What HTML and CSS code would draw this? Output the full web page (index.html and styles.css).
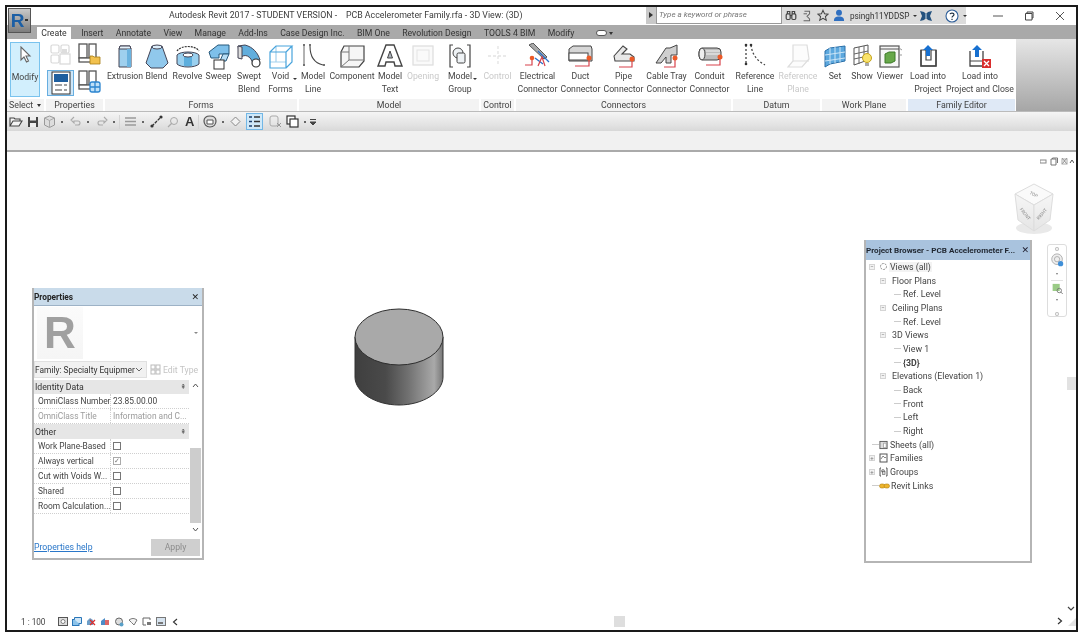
FILE: index.html
```html
<!DOCTYPE html>
<html lang="en">
<head>
<meta charset="utf-8">
<title>Autodesk Revit 2017</title>
<link rel="stylesheet" href="styles.css">
</head>
<body>
<div class="frame">
  <div class="appbtn"><span class="appr">R</span><span class="appdot"></span></div>

  <header class="titlebar">
    <div class="title">Autodesk Revit 2017 - STUDENT VERSION - &nbsp; &nbsp;PCB Accelerometer Family.rfa - 3D View: (3D)</div>
    <div class="searchgroup">
      <span class="sarrow"></span>
      <div class="search">Type a keyword or phrase</div>
      <div class="infotools">
        <svg width="12" height="13" viewBox="0 0 15 14"><g fill="none" stroke="#444" stroke-width="1.500"><rect x="1.500" y="5" width="5" height="7" rx="1.500"/><rect x="8.500" y="5" width="5" height="7" rx="1.500"/><path d="M3 5V2h3v3M9 5V2h3v3M6 7h3"/></g></svg>
        <svg width="12" height="13" viewBox="0 0 14 14"><g fill="none" stroke="#666" stroke-width="1.200"><path d="M4 2h6v3L7 8l3 3v2H3"/><path d="M3 5h4"/></g></svg>
        <svg width="12" height="13" viewBox="0 0 14 14"><path d="M7 1l1.800 4 4.200.4-3.200 2.800 1 4.300L7 10.200 3.200 12.500l1-4.300L1 5.400 5.200 5z" fill="none" stroke="#444" stroke-width="1.200"/></svg>
        <svg width="12" height="13" viewBox="0 0 13 14"><circle cx="6.500" cy="4" r="3.200" fill="#2f6fc0"/><path d="M1 13c0-4 2-5 5.500-5s5.500 1 5.500 5z" fill="#2f6fc0"/></svg>
        <span class="user">psingh11YDDSP</span><span class="caret small"></span>
        <svg class="xicon" width="14" height="14" viewBox="0 0 14 14"><path d="M1 2l4 1 2 2 2-2 4-1-2 5 2 5-4-1-2-2-2 2-4 1 2-5z" fill="#24527f"/><path d="M7 5v4" stroke="#cfe0ee"/></svg>
        <svg class="help" width="14" height="14" viewBox="0 0 14 14"><circle cx="7" cy="7" r="6" fill="#fff" stroke="#2f5f9a" stroke-width="1.100"/><path d="M5 5.200C5.200 3.700 9 3.500 9 5.500 9 7 7 6.800 7 8.500M7 9.800v1.300" fill="none" stroke="#234" stroke-width="1.200"/></svg>
        <span class="caret small last"></span>
      </div>
    </div>
    <div class="winctl">
      <svg width="10" height="10" viewBox="0 0 10 10"><path d="M0 5h10" stroke="#555"/></svg>
      <svg width="10" height="10" viewBox="0 0 10 10"><path d="M1.500 2.500h6.500v6.500h-6.500zM3 2.500V1h6v6H8" fill="none" stroke="#444"/></svg>
      <svg width="10" height="10" viewBox="0 0 10 10"><path d="M1 1l8 8M9 1l-8 8" stroke="#555"/></svg>
    </div>
  </header>

  <nav class="tabs">
    <span class="tab active">Create</span>
    <span class="tab">Insert</span>
    <span class="tab">Annotate</span>
    <span class="tab">View</span>
    <span class="tab">Manage</span>
    <span class="tab">Add-Ins</span>
    <span class="tab">Case Design Inc.</span>
    <span class="tab">BIM One</span>
    <span class="tab">Revolution Design</span>
    <span class="tab">TOOLS 4 BIM</span>
    <span class="tab">Modify</span>
    <span class="tabctl"><span class="pill"></span><span class="caret"></span></span>
  </nav>

  <section class="ribbon">
    <div class="panel p-select">
      <div class="pbody">
        <div class="modify">
          <svg width="14" height="18" viewBox="0 0 14 18"><path d="M3 1v13l3-3 2.500 5 2-1-2.500-5h4z" fill="#fff" stroke="#666" stroke-width="1.100"/></svg>
          <span class="lbl modlbl">Modify</span>
        </div>
      </div>
      <div class="pfoot footleft">Select <span class="caret dark"></span></div>
    </div>
    <div class="panel p-props">
      <div class="pbody propgrid">
        <svg class="pi1" width="22" height="22" viewBox="0 0 22 22"><g fill="#fff" stroke="#d8d8d8" stroke-width="1.200"><rect x="1" y="2" width="8" height="8" rx="1.500"/><rect x="11" y="2" width="8" height="8" rx="1.500"/><rect x="1" y="12" width="8" height="8" rx="1.500"/><rect x="10" y="11" width="10" height="10"/></g><rect x="12" y="6" width="5" height="4" fill="#ddd"/></svg>
        <svg class="pi2" width="23" height="22" viewBox="0 0 23 22"><g fill="#fff" stroke="#555" stroke-width="1.300"><rect x="1" y="1" width="8" height="14"/><rect x="11" y="1" width="7" height="14"/><rect x="1" y="15" width="17" height="4"/></g><path d="M12 13h3l1 1h6v7H12z" fill="#f2c14e" stroke="#a67c12" stroke-width=".8"/></svg>
        <div class="pi3"><svg width="20" height="24" viewBox="0 0 20 24"><rect x="1" y="1" width="18" height="22" fill="#fff" stroke="#333"/><rect x="3" y="3" width="14" height="8" fill="#1f5f9f"/><path d="M4 14h7M4 19h7M13 14h3M13 19h3" stroke="#444" stroke-width="1.200"/></svg></div>
        <svg class="pi4" width="23" height="23" viewBox="0 0 23 23"><g fill="#fff" stroke="#555" stroke-width="1.300"><rect x="1" y="1" width="8" height="14"/><rect x="11" y="1" width="7" height="14"/><rect x="1" y="15" width="13" height="4"/></g><rect x="12" y="12" width="10" height="10" rx="2" fill="#bfe0f7" stroke="#2b84cf" stroke-width="1.300"/><path d="M17 12v10M12 17h10" stroke="#2b84cf" stroke-width="1.300"/></svg>
      </div>
      <div class="pfoot">Properties</div>
    </div>
    <div class="panel p-forms">
      <div class="pbody pad4">
        <div class="tool w32"><svg class="ico" width="28" height="27" viewBox="0 0 28 27"><path d="M9 3h10l1 3v18H8V6z" fill="#9fd0ee" stroke="#445" stroke-width="1"/><path d="M9 3h10l1 3H8z" fill="#e6f3fb" stroke="#445"/><path d="M16 6v18h4V6z" fill="#6bb3df"/></svg><span class="lbl">Extrusion</span></div>
        <div class="tool w31"><svg class="ico" width="28" height="27" viewBox="0 0 28 27"><path d="M9 3h10l6 17-5 5H8l-5-5z" fill="#90c8ec" stroke="#445"/><ellipse cx="14" cy="4" rx="5" ry="2" fill="#dceefa" stroke="#445"/></svg><span class="lbl">Blend</span></div>
        <div class="tool w31"><svg class="ico" width="28" height="27" viewBox="0 0 28 27"><path d="M3 8c4-6 18-6 22 0" fill="none" stroke="#333" stroke-dasharray="2 1" stroke-width="1.200"/><path d="M3 12c3-4 19-4 22 0v9c-4 4-18 4-22 0z" fill="#9ad0ef" stroke="#445"/><path d="M10 12v11h8V12z" fill="#5caedd"/><ellipse cx="14" cy="12" rx="5" ry="2" fill="#fff" stroke="#445"/></svg><span class="lbl">Revolve</span></div>
        <div class="tool w31"><svg class="ico" width="28" height="27" viewBox="0 0 28 27"><path d="M4 9l9-7h11v9H14v4H6z" fill="#7ec0ea" stroke="#27587a"/><path d="M18 11h6l-3 7h-6z" fill="#b7def5" stroke="#27587a"/><rect x="9" y="17" width="10" height="9" fill="#fff" stroke="#333"/></svg><span class="lbl">Sweep</span></div>
        <div class="tool w30"><svg class="ico" width="28" height="27" viewBox="0 0 28 27"><path d="M3 3l7-1c8 2 13 8 15 15l-7 4C16 13 10 10 5 15z" fill="#62aedd" stroke="#445"/><path d="M3 3v12l4 1V4z" fill="#ddd" stroke="#445"/><circle cx="21" cy="20" r="4" fill="#fff" stroke="#333" stroke-width="1.200"/></svg><span class="lbl">Swept<br>Blend</span></div>
        <div class="tool w33"><svg class="ico" width="26" height="27" viewBox="0 0 26 27"><g fill="none" stroke="#49a4dc" stroke-width="1.200"><path d="M2 9h16v16H2zM2 9l6-6h16L18 9M24 3v16l-6 6"/><path d="M8 3v16H2M8 19l10 0" stroke-opacity=".5"/></g></svg><span class="lbl">Void<br>Forms</span><span class="dropdot"></span></div>
      </div>
      <div class="pfoot">Forms</div>
    </div>
    <div class="panel p-model">
      <div class="pbody">
        <div class="tool w28"><svg class="ico" width="26" height="27" viewBox="0 0 26 27"><g fill="#444"><circle cx="4" cy="2" r="1"/><circle cx="4" cy="22" r="1"/><circle cx="10" cy="2" r="1"/><circle cx="24" cy="22" r="1"/></g><path d="M4 3v18" stroke="#666"/><path d="M10 3c0 10 4 17 13 19" fill="none" stroke="#444" stroke-width="1.100"/></svg><span class="lbl">Model<br>Line</span></div>
        <div class="tool w50"><svg class="ico" width="28" height="27" viewBox="0 0 28 27"><path d="M6 3h20v15l-5 6H3V9z" fill="#f6f6f6" stroke="#444" stroke-width="1.200"/><path d="M3 9h8V3M11 9v8h15M11 17l-8 7" fill="none" stroke="#777"/></svg><span class="lbl">Component</span></div>
        <div class="tool w26"><svg class="ico" width="28" height="27" viewBox="0 0 28 27"><path d="M10 2h8l8 21h-7l-1-4h-8l-1 4H2z" fill="#fff" stroke="#444" stroke-width="1.400"/><path d="M14 8l-2.500 7h5z" fill="#aeb5bd" stroke="#444"/></svg><span class="lbl">Model<br>Text</span></div>
        <div class="tool w40"><svg class="ico" width="24" height="27" viewBox="0 0 24 27"><rect x="2" y="3" width="20" height="19" fill="#fafafa" stroke="#ddd" stroke-width="1.200"/><rect x="6" y="7" width="12" height="11" fill="none" stroke="#e4e4e4"/></svg><span class="lbl off">Opening</span></div>
        <div class="tool w34"><svg class="ico" width="24" height="27" viewBox="0 0 24 27"><path d="M5 2H2v22h3M19 2h3v22h-3" fill="none" stroke="#444" stroke-width="1.200"/><circle cx="10" cy="10" r="5" fill="#eef2f5" stroke="#444"/><rect x="9" y="10" width="8" height="10" rx="1.500" fill="#eef2f5" stroke="#444"/></svg><span class="lbl">Model<br>Group</span><span class="dropdot"></span></div>
      </div>
      <div class="pfoot">Model</div>
    </div>
    <div class="panel p-control">
      <div class="pbody">
        <div class="tool w33"><svg class="ico" width="24" height="27" viewBox="0 0 24 27"><path d="M12 3v20M2 13h20" stroke="#e3e3e3" stroke-width="1.300" stroke-dasharray="3 2"/></svg><span class="lbl off">Control</span></div>
      </div>
      <div class="pfoot">Control</div>
    </div>
    <div class="panel p-conn">
      <div class="pbody">
        <div class="tool w43"><svg class="ico" width="28" height="27" viewBox="0 0 28 27"><path d="M5 2l4-2 14 14-3 2z" fill="#aaa" stroke="#555"/><path d="M11 15l8 6M25 19L14 8" stroke="#2a70c9" stroke-width="1.300"/><path d="M14 23l4-9 3 9" fill="none" stroke="#d8434c" stroke-width="1.200"/><path d="M1 22h7v-7" fill="none" stroke="#d8434c" stroke-width="1.200"/><circle cx="8" cy="15" r="2.300" fill="#ec5a28"/></svg><span class="lbl">Electrical<br>Connector</span></div>
        <div class="tool w43"><svg class="ico" width="28" height="27" viewBox="0 0 28 27"><path d="M2 6l4-3h18l1 3v12H2z" fill="#d6d6d6" stroke="#444"/><rect x="2" y="10" width="19" height="7" fill="#fff" stroke="#444"/><path d="M8 23h14v-7" fill="none" stroke="#d8434c" stroke-width="1.200"/><circle cx="22" cy="15" r="2.500" fill="#ec5a28"/></svg><span class="lbl">Duct<br>Connector</span></div>
        <div class="tool w43"><svg class="ico" width="28" height="27" viewBox="0 0 28 27"><path d="M4 13L13 3l4 3-5 5h8l4 3v4H5z" fill="#e8e8e8" stroke="#444" stroke-width="1.100"/><path d="M9 24h13v-7" fill="none" stroke="#d8434c" stroke-width="1.200"/><circle cx="22" cy="16" r="2.500" fill="#ec5a28"/></svg><span class="lbl">Pipe<br>Connector</span></div>
        <div class="tool w43"><svg class="ico" width="28" height="27" viewBox="0 0 28 27"><path d="M3 20L13 5h4l7-3v10h-6v8h-5v-6l-5 6z" fill="#cfcfcf" stroke="#444"/><path d="M11 24h11v-8" fill="none" stroke="#d8434c" stroke-width="1.200"/><circle cx="22" cy="15" r="2.500" fill="#ec5a28"/></svg><span class="lbl">Cable Tray<br>Connector</span></div>
        <div class="tool w43"><svg class="ico" width="28" height="27" viewBox="0 0 28 27"><rect x="3" y="5" width="22" height="12" rx="4" fill="#bdbdbd" stroke="#444"/><ellipse cx="6" cy="11" rx="3" ry="6" fill="#eee" stroke="#444"/><path d="M10 8h14M10 11h14" stroke="#f4f4f4"/><path d="M10 22h14v-7" fill="none" stroke="#d8434c" stroke-width="1.200"/><circle cx="24" cy="14" r="2.500" fill="#ec5a28"/></svg><span class="lbl">Conduit<br>Connector</span></div>
      </div>
      <div class="pfoot">Connectors</div>
    </div>
    <div class="panel p-datum">
      <div class="pbody">
        <div class="tool w44"><svg class="ico" width="26" height="27" viewBox="0 0 26 27"><g fill="none" stroke="#444" stroke-width="1.300" stroke-dasharray="2 2"><path d="M4 2v18"/><path d="M9 2c1 9 6 16 14 20"/></g><g fill="#333"><circle cx="4" cy="2" r="1.300"/><circle cx="9" cy="2" r="1.300"/><circle cx="4" cy="21" r="1.300"/></g></svg><span class="lbl">Reference<br>Line</span></div>
        <div class="tool w42"><svg class="ico" width="26" height="27" viewBox="0 0 26 27"><path d="M8 2h14l2 14-7 8H3l5-6z" fill="#fcfcfc" stroke="#ddd" stroke-width="1.200"/><path d="M8 18h16" stroke="#ddd"/></svg><span class="lbl off">Reference<br>Plane</span></div>
      </div>
      <div class="pfoot">Datum</div>
    </div>
    <div class="panel p-wp">
      <div class="pbody">
        <div class="tool w26"><svg class="ico" width="22" height="27" viewBox="0 0 22 27"><path d="M6 5l15-2v15L6 21 1 24V8z" fill="#5ca8de" stroke="#2a6fa8"/><path d="M6 5v16M11 4v16M16 4v15M1 12l20-3M1 18l20-3" stroke="#cde6f7"/></svg><span class="lbl">Set</span></div>
        <div class="tool w28"><svg class="ico" width="22" height="27" viewBox="0 0 22 27"><path d="M3 5l14-3v15L3 22z" fill="#fff" stroke="#555"/><path d="M8 4v17M13 3v16M3 11l14-3M3 16l14-3" stroke="#666"/><circle cx="16" cy="15" r="4.500" fill="#f9e36b" stroke="#c3a21d"/><path d="M14 20h4v3h-4z" fill="#aaa"/></svg><span class="lbl">Show</span></div>
        <div class="tool w28"><svg class="ico" width="24" height="27" viewBox="0 0 24 27"><rect x="2" y="3" width="19" height="21" fill="#f7f7f7" stroke="#555" stroke-width="1.200"/><path d="M2 6h19" stroke="#555"/><path d="M7 11l4-2h6v9l-4 2H7z" fill="#67a84a" stroke="#3d7a28"/><path d="M21 5l3 2M21 12h3" stroke="#999"/></svg><span class="lbl">Viewer</span></div>
      </div>
      <div class="pfoot">Work Plane</div>
    </div>
    <div class="panel p-fam">
      <div class="pbody">
        <div class="tool w40"><svg class="ico" width="24" height="27" viewBox="0 0 24 27"><path d="M5 7v16h15V7h-5v10h-5V7z" fill="#fff" stroke="#444" stroke-width="1.200"/><path d="M5 7v16h15V7" fill="none" stroke="#444" stroke-width="1.400"/><path d="M12 2l5 5h-3v6h-4V7H7z" fill="#1770d0"/></svg><span class="lbl">Load into<br>Project</span></div>
        <div class="tool w64"><svg class="ico" width="24" height="27" viewBox="0 0 24 27"><path d="M2 8v15h13V8" fill="#fff" stroke="#444" stroke-width="1.300"/><path d="M2 18h13" stroke="#444"/><path d="M9 2l5 5h-3v7H7V7H4z" fill="#1770d0"/><rect x="14" y="16" width="9" height="9" fill="#d92d2d"/><path d="M16 18l5 5M21 18l-5 5" stroke="#fff" stroke-width="1.300"/></svg><span class="lbl">Load into<br>Project and Close</span></div>
      </div>
      <div class="pfoot blue">Family Editor</div>
    </div>
    <div class="ribfill"></div>
  </section>

  <div class="qat">
    <svg width="14" height="12" viewBox="0 0 14 12"><path d="M1 10V2h4l1 1h5v2M1 10l3-5h9l-3 5z" fill="#f4f4f4" stroke="#444" stroke-width="1.100"/></svg>
    <svg class="g3" width="12" height="12" viewBox="0 0 12 12"><path d="M1 1h10v10H1z" fill="#444"/><rect x="3" y="1" width="6" height="3.500" fill="#eee"/><rect x="3" y="7" width="6" height="4" fill="#eee"/></svg>
    <svg class="g3" width="13" height="13" viewBox="0 0 13 13"><path d="M6.500 1l5 2v7l-5 2.500L1.500 10V3z" fill="#ddd" stroke="#999"/><path d="M1.500 3l5 2.500 5-2.500M6.500 5.500v7" stroke="#aaa" fill="none"/></svg>
    <span class="dot"></span>
    <svg class="g8" width="12" height="11" viewBox="0 0 12 11"><path d="M4 1L1 4l3 3V5h4a2 2 0 010 4H5" fill="none" stroke="#aaa" stroke-width="1.100"/></svg>
    <span class="dot"></span>
    <svg class="g8" width="12" height="11" viewBox="0 0 12 11"><path d="M8 1l3 3-3 3V5H4a2 2 0 000 4h3" fill="none" stroke="#aaa" stroke-width="1.100"/></svg>
    <span class="dot"></span>
    <span class="qsep"></span>
    <svg width="13" height="9" viewBox="0 0 13 9"><path d="M1 1h11M1 8h11M1 4.500h11" stroke="#9a9a9a" stroke-width="1.300"/></svg>
    <span class="dot"></span>
    <svg class="g5" width="13" height="13" viewBox="0 0 13 13"><path d="M2 11L11 2" stroke="#333" stroke-width="1.300" stroke-dasharray="3 1"/><circle cx="2" cy="11" r="1.600" fill="#333"/><circle cx="11" cy="2" r="1.600" fill="#333"/></svg>
    <svg class="g3" width="12" height="12" viewBox="0 0 12 12"><circle cx="7" cy="5" r="3.500" fill="none" stroke="#aaa"/><path d="M1 11l4-4" stroke="#aaa" stroke-width="1.300"/></svg>
    <span class="qa">A</span>
    <span class="qsep"></span>
    <svg width="14" height="13" viewBox="0 0 14 13"><path d="M7 1c4 0 6 2 6 5s-2 6-6 6-6-3-6-6 2-5 6-5z" fill="#ddd" stroke="#555" stroke-width="1.200"/><path d="M4 5h6v4H4z" fill="#fff" stroke="#555"/></svg>
    <span class="dot"></span>
    <svg class="g5" width="11" height="12" viewBox="0 0 11 12"><path d="M5.500 1L10 5.500 5.500 10 1 5.500z" fill="#f2f2f2" stroke="#888"/></svg>
    <div class="qhi"><svg width="13" height="13" viewBox="0 0 13 13"><path d="M1 2h3M1 6.500h3M1 11h3" stroke="#1b3f70" stroke-width="1.600"/><path d="M6 2h6M6 6.500h6M6 11h6" stroke="#333" stroke-width="1.400"/></svg></div>
    <svg class="g5" width="13" height="13" viewBox="0 0 13 13"><rect x="1" y="1" width="8" height="10" rx="2" fill="none" stroke="#aaa"/><path d="M8 8l4 4M12 8l-4 4" stroke="#999"/></svg>
    <svg class="g3" width="13" height="13" viewBox="0 0 13 13"><rect x="1" y="1" width="8" height="8" fill="#fff" stroke="#333" stroke-width="1.200"/><rect x="4" y="4" width="8" height="8" fill="#fff" stroke="#333" stroke-width="1.200"/></svg>
    <span class="dot"></span>
    <svg width="8" height="8" viewBox="0 0 8 8"><path d="M1 1.500h6M1 4l3 3 3-3z" stroke="#444" fill="#444"/></svg>
  </div>
  <div class="band"></div>

  <main class="canvas">
    <div class="viewctl">
      <svg width="34" height="9" viewBox="0 0 34 9"><rect x="0" y="3" width="6" height="3" fill="none" stroke="#888"/><path d="M11 2h5v6h-5zM12.500 2V1h5v5" fill="none" stroke="#777"/><path d="M22 1l5 6M27 1l-5 6" stroke="#888"/><rect x="22" y="2" width="5" height="5" fill="none" stroke="#aaa"/><path d="M30 6l2-3 2 3" fill="none" stroke="#555"/></svg>
    </div>

    <svg class="viewcube" width="44" height="54" viewBox="0 0 44 54">
      <defs><linearGradient id="cf" x1="0" y1="0" x2="0" y2="1"><stop offset="0" stop-color="#f6f6f6"/><stop offset="1" stop-color="#e5e5e5"/></linearGradient></defs>
      <ellipse cx="22" cy="46" rx="18" ry="6" fill="#e9e9e9"/>
      <path d="M22 2L41 12 22 23 3 12z" fill="#fafafa" stroke="#ddd"/>
      <path d="M3 12L22 23V49L6 38z" fill="url(#cf)" stroke="#ddd"/>
      <path d="M41 12L22 23V49L38 38z" fill="url(#cf)" stroke="#ddd"/>
      <text class="cubetxt" x="22" y="14" transform="rotate(28 22 12)">TOP</text>
      <text class="cubetxt" x="12" y="33" transform="rotate(50 12 33)">FRONT</text>
      <text class="cubetxt" x="31" y="33" transform="rotate(-50 31 33)">RIGHT</text>
    </svg>

    <div class="navbar">
      <span class="navdot"></span>
      <svg width="15" height="17" viewBox="0 0 15 17"><circle cx="7" cy="7" r="6" fill="#eee" stroke="#aaa"/><circle cx="7" cy="7" r="3" fill="none" stroke="#aaa"/><circle cx="11" cy="12" r="3" fill="#3f8fd8"/></svg>
      <span class="navcaret"></span>
      <span class="navline"></span>
      <svg width="13" height="13" viewBox="0 0 13 13"><rect x="1" y="1" width="8" height="8" fill="#9acb86"/><circle cx="8.500" cy="8.500" r="2.500" fill="none" stroke="#777"/><path d="M10 10l2.500 2.500" stroke="#777"/></svg>
      <span class="navcaret"></span>
      <span class="navdot lastdot"></span>
    </div>

    <svg class="cylinder" width="92" height="100" viewBox="0 0 92 100">
      <defs>
        <linearGradient id="cyl" x1="0" y1="0" x2="1" y2="0">
          <stop offset="0" stop-color="#3f3f3f"/>
          <stop offset=".35" stop-color="#4a4a4a"/>
          <stop offset=".6" stop-color="#707070"/>
          <stop offset=".9" stop-color="#a9a9a9"/>
          <stop offset="1" stop-color="#777"/>
        </linearGradient>
      </defs>
      <path d="M2 30V70C2 85 22 98 46 98S90 85 90 70V30z" fill="url(#cyl)" stroke="#333"/>
      <ellipse cx="46" cy="30" rx="44" ry="28" fill="#a9a9a9" stroke="#2f2f2f"/>
    </svg>

    <aside class="props">
      <div class="ptitle"><span>Properties</span><span class="px">✕</span></div>
      <div class="preview">
        <div class="rlogo"><span>R</span></div>
        <span class="pvcaret"></span>
      </div>
      <div class="typerow">
        <div class="typesel"><span class="typeval">Family: Specialty Equipmer</span><svg width="8" height="5" viewBox="0 0 8 5"><path d="M1 1l3 3 3-3" fill="none" stroke="#666"/></svg></div>
        <div class="edittype"><svg width="11" height="11" viewBox="0 0 11 11"><g fill="none" stroke="#bbb"><rect x="1" y="1" width="4" height="4"/><rect x="6" y="1" width="4" height="4"/><rect x="1" y="6" width="4" height="4"/><rect x="6" y="6" width="4" height="4"/></g></svg><span>Edit Type</span></div>
      </div>
      <div class="ptable">
        <div class="rows">
          <div class="ghead"><span>Identity Data</span><span class="coll">⇞</span></div>
          <div class="prow"><span class="pk">OmniClass Number</span><span class="pv">23.85.00.00</span></div>
          <div class="prow dim"><span class="pk">OmniClass Title</span><span class="pv">Information and C...</span></div>
          <div class="ghead other"><span>Other</span><span class="coll">⇞</span></div>
          <div class="prow"><span class="pk">Work Plane-Based</span><span class="pv"><span class="cb"></span></span></div>
          <div class="prow"><span class="pk">Always vertical</span><span class="pv"><span class="cb on">✓</span></span></div>
          <div class="prow"><span class="pk">Cut with Voids W...</span><span class="pv"><span class="cb"></span></span></div>
          <div class="prow"><span class="pk">Shared</span><span class="pv"><span class="cb"></span></span></div>
          <div class="prow"><span class="pk">Room Calculation...</span><span class="pv"><span class="cb"></span></span></div>
        </div>
        <div class="pscroll">
          <svg width="7" height="5" viewBox="0 0 7 5"><path d="M1 4l2.500-3L6 4" fill="none" stroke="#555"/></svg>
          <div class="pthumb"></div>
          <svg width="7" height="5" viewBox="0 0 7 5"><path d="M1 1l2.500 3L6 1" fill="none" stroke="#555"/></svg>
        </div>
      </div>
      <div class="pfooter"><span class="phelp">Properties help</span><span class="apply">Apply</span></div>
    </aside>

    <aside class="browser">
      <div class="btitle"><span>Project Browser - PCB Accelerometer F...</span><span class="bx">✕</span></div>
      <div class="tree">
        <div class="node n0"><span class="exp">−</span><svg class="ti" width="9" height="9" viewBox="0 0 9 9"><circle cx="4.500" cy="4.500" r="3" fill="none" stroke="#888" stroke-dasharray="2 1"/></svg><span class="sel">Views (all)</span></div>
        <div class="node n1"><span class="exp">−</span><span>Floor Plans</span></div>
        <div class="node n2"><span class="dash"></span><span>Ref. Level</span></div>
        <div class="node n1"><span class="exp">−</span><span>Ceiling Plans</span></div>
        <div class="node n2"><span class="dash"></span><span>Ref. Level</span></div>
        <div class="node n1"><span class="exp">−</span><span>3D Views</span></div>
        <div class="node n2"><span class="dash"></span><span>View 1</span></div>
        <div class="node n2"><span class="dash"></span><b>{3D}</b></div>
        <div class="node n1"><span class="exp">−</span><span>Elevations (Elevation 1)</span></div>
        <div class="node n2"><span class="dash"></span><span>Back</span></div>
        <div class="node n2"><span class="dash"></span><span>Front</span></div>
        <div class="node n2"><span class="dash"></span><span>Left</span></div>
        <div class="node n2"><span class="dash"></span><span>Right</span></div>
        <div class="node n0"><span class="dash short"></span><svg class="ti" width="10" height="10" viewBox="0 0 10 10"><rect x="1" y="1" width="8" height="8" fill="#ddd" stroke="#555"/><path d="M5 3h3v5H5z" fill="#fff" stroke="#777" stroke-width=".6"/></svg><span>Sheets (all)</span></div>
        <div class="node n0"><span class="exp">+</span><svg class="ti" width="9" height="10" viewBox="0 0 9 10"><rect x="1" y="1" width="7" height="8" fill="#fff" stroke="#555"/><path d="M2 6l2-3 2 2 1-1" fill="none" stroke="#555" stroke-width=".7"/></svg><span>Families</span></div>
        <div class="node n0"><span class="exp">+</span><svg class="ti" width="9" height="10" viewBox="0 0 9 10"><path d="M2 1H1v8h1M7 1h1v8H7" fill="none" stroke="#555"/><circle cx="4" cy="4" r="1.500" fill="#ccc" stroke="#555" stroke-width=".6"/><rect x="3.500" y="4.500" width="2.500" height="3" fill="#ddd" stroke="#555" stroke-width=".6"/></svg><span>Groups</span></div>
        <div class="node n0 links"><span class="dash short"></span><svg class="ti" width="11" height="6" viewBox="0 0 11 6"><rect x=".5" y="1" width="5.500" height="4" rx="2" fill="#eeb52d" stroke="#b07d0a" stroke-width=".6"/><rect x="5" y="1" width="5.500" height="4" rx="2" fill="#eeb52d" stroke="#b07d0a" stroke-width=".6"/></svg><span>Revit Links</span></div>
      </div>
    </aside>

    <div class="vthumb"></div>
    <svg class="vdown" width="8" height="6" viewBox="0 0 8 6"><path d="M1 1l3 3 3-3" fill="none" stroke="#444" stroke-width="1.200"/></svg>

    <footer class="viewbar">
      <span class="scale">1 : 100</span>
      <div class="vbicons">
        <svg width="10" height="9" viewBox="0 0 10 9"><rect x=".5" y=".5" width="9" height="8" fill="#ddd" stroke="#555"/><circle cx="5" cy="4.500" r="2" fill="#fff" stroke="#555" stroke-width=".7"/></svg>
        <svg width="10" height="9" viewBox="0 0 10 9"><rect x=".5" y="2.500" width="6.500" height="6" fill="#8cc3ea" stroke="#2a76b8"/><path d="M2.500 2.500V.5h7v6H7" fill="#cfe6f6" stroke="#2a76b8"/></svg>
        <svg width="10" height="9" viewBox="0 0 10 9"><path d="M1 8V4l3-3 3 2v5z" fill="#6d9fc9"/><path d="M4 3l5 5M9 3L4 8" stroke="#d92d2d" stroke-width="1.300"/></svg>
        <svg width="10" height="9" viewBox="0 0 10 9"><path d="M1 8V4l4-3v7z" fill="#4d8cc7"/><path d="M5 3h4v5H5z" fill="#d66"/></svg>
        <svg width="10" height="10" viewBox="0 0 10 10"><circle cx="5" cy="4.500" r="3.500" fill="#ddd" stroke="#666"/><circle cx="7.500" cy="7.500" r="2" fill="#5aa0c8"/></svg>
        <svg width="10" height="8" viewBox="0 0 10 8"><path d="M1 2c3-2 5-2 8 0L6 7C4 5 3 4 1 2z" fill="#f3f3f3" stroke="#777"/></svg>
        <svg width="10" height="9" viewBox="0 0 10 9"><path d="M1 1h7v2M1 1v7h3" fill="none" stroke="#666"/><rect x="5" y="5" width="4" height="3" fill="#777"/></svg>
        <svg width="10" height="9" viewBox="0 0 10 9"><rect x=".5" y=".5" width="9" height="8" fill="#d6e3ef" stroke="#777"/><rect x="2" y="5" width="5" height="2" fill="#777"/></svg>
        <svg class="vbback" width="6" height="8" viewBox="0 0 6 8"><path d="M5 1L1.500 4 5 7" fill="none" stroke="#333" stroke-width="1.100"/></svg>
      </div>
      <div class="hthumb"></div>
      <svg class="hright" width="6" height="8" viewBox="0 0 6 8"><path d="M1 1l3.500 3L1 7" fill="none" stroke="#333" stroke-width="1.200"/></svg>
      <svg class="grip" width="8" height="8" viewBox="0 0 8 8"><path d="M8 0v8H0z" fill="#e3e3e3"/></svg>
    </footer>
  </main>
</div>
</body>
</html>
```

FILE: styles.css
```css
* { box-sizing: border-box; }
html, body { margin: 0; padding: 0; background: #fff; }
body {
  width: 1084px;
  height: 636px;
  overflow: hidden;
  padding: 5px 6px 4px 5px;
  font-family: Roboto, "Liberation Sans", sans-serif;
  font-size: 8.700px;
  color: #3c3c3c;
}
.frame {
  position: relative;
  width: 1073px;
  height: 627px;
  border: 2px solid #1a1a1a;
  display: flex;
  flex-direction: column;
  background: #fff;
  filter: blur(0.45px);
  overflow: hidden;
}

/* App button */
.appbtn {
  position: absolute;
  left: 1px;
  top: 1px;
  width: 23px;
  height: 25px;
  background: linear-gradient(#c9c9c9, #7d7d7d);
  border: 1px solid #555;
  display: flex;
  align-items: center;
  justify-content: center;
  z-index: 3;
}
.appr { font: bold 19px "Liberation Sans", sans-serif; color: #1c5fa5; margin-right: 4px; }
.appdot { position: absolute; right: 2px; top: 10px; width: 3px; height: 2px; background: #333; }

/* Title bar */
.titlebar { height: 18px; display: flex; align-items: stretch; flex: none; }
.title { width: 639px; flex: none; padding-left: 162px; line-height: 16px; font-size: 8.800px; white-space: nowrap; color: #3c3c3c; }
.searchgroup { width: 320px; flex: none; display: flex; background: #c9c9c9; height: 17px; }
.sarrow { width: 10px; flex: none; position: relative; }
.sarrow::after { content: ""; position: absolute; left: 3px; top: 5px; border-left: 4px solid #333; border-top: 3.500px solid transparent; border-bottom: 3.500px solid transparent; }
.search { width: 126px; flex: none; background: #fff; border: 1px solid #999; border-width: 0 1px 1px 1px; color: #777; font-style: italic; font-size: 8px; line-height: 15px; padding-left: 2px; white-space: nowrap; overflow: hidden; }
.infotools { flex: 1; display: flex; align-items: center; gap: 4px; padding-left: 3px; background: #dcdcdc; min-width: 0; }
.infotools svg { flex: none; }
.user { font-size: 8.200px; color: #333; margin-left: 1px; white-space: nowrap; width: 62px; flex: none; }
.xicon { margin-left: -2px; }
.help { margin-left: 8px; }
.caret { display: inline-block; border-top: 3px solid #333; border-left: 2.500px solid transparent; border-right: 2.500px solid transparent; vertical-align: middle; flex: none; }
.caret.small { margin-left: -3px; border-top-width: 2px; border-left-width: 2px; border-right-width: 2px; }
.caret.small.last { margin-left: 0; }
.winctl { flex: 1; display: flex; align-items: center; padding-left: 27px; gap: 21px; height: 17px; }

/* Tabs */
.tabs { height: 14px; flex: none; background: #a9a9a9; display: flex; align-items: flex-end; padding-left: 30px; }
.tab { font-size: 8.700px; line-height: 12px; height: 12px; padding: 0 6.200px; color: #333; white-space: nowrap; }
.tab.active { background: #fff; width: 34px; padding: 0; text-align: center; margin-right: 4px; }
.tabctl { margin-left: 15px; display: inline-flex; align-items: center; gap: 2px; height: 12px; }
.pill { width: 11px; height: 6px; border-radius: 3px; background: #fff; border: 1px solid #555; }

/* Ribbon */
.ribbon { height: 73px; flex: none; display: flex; gap: 2px; border-bottom: 1px solid #bbb; }
.panel { display: flex; flex-direction: column; height: 72px; flex: none; }
.pbody { height: 60px; display: flex; }
.pad4 { padding-left: 4px; }
.pfoot { height: 12px; background: #f3f3f3; text-align: center; line-height: 12px; font-size: 8.800px; color: #444; white-space: nowrap; }
.pfoot.blue { background: #dfe9f6; }
.footleft { text-align: left; padding-left: 2px; }
.caret.dark { margin-left: 2px; }
.p-select { width: 37px; }
.p-props { width: 57px; }
.p-forms { width: 192px; }
.p-model { width: 180px; }
.p-control { width: 33px; }
.p-conn { width: 215px; }
.p-datum { width: 87px; }
.p-wp { width: 84px; }
.p-fam { width: 107px; }
.ribfill { flex: 1; height: 72px; margin-left: -1px; background: linear-gradient(#e6e6e6, #a6a6a6); }

.modify { margin: 3px 0 2px 3px; width: 30px; height: 55px; background: #d2effd; border: 1px solid #79c3ee; display: flex; flex-direction: column; align-items: center; padding-top: 3px; }
.propgrid { display: grid; grid-template-columns: 30px 27px; grid-template-rows: 27px 30px; padding-left: 1px; }
.pi1 { margin: 4px 0 0 3px; }
.pi2 { margin: 4px 0 0 1px; }
.pi3 { margin: 4px 0 0 0; width: 27px; height: 26px; background: #cfe7f8; border: 1px solid #67aee0; display: flex; justify-content: center; align-items: center; }
.pi4 { margin: 4px 0 0 1px; }

.tool { display: flex; flex-direction: column; align-items: center; padding-top: 4px; position: relative; flex: none; }
.ico { flex: none; height: 27px; margin-bottom: 0; }
.lbl { margin: 0 -14px; text-align: center; white-space: nowrap; line-height: 13px; font-size: 8.700px; color: #444; }
.lbl.off { color: #c9c9c9; }
.lbl.modlbl { margin-top: 7px; }
.dropdot { position: absolute; right: 0; top: 39px; border-top: 2px solid #333; border-left: 2px solid transparent; border-right: 2px solid transparent; }
.w26 { width: 26px; } .w28 { width: 28px; } .w30 { width: 30px; } .w31 { width: 31px; } .w32 { width: 32px; }
.w33 { width: 33px; } .w34 { width: 34px; } .w40 { width: 40px; } .w42 { width: 42px; } .w43 { width: 43px; }
.w44 { width: 44px; } .w50 { width: 50px; } .w64 { width: 64px; }

/* Quick access */
.qat { height: 19px; flex: none; display: flex; align-items: center; padding-left: 2px; background: linear-gradient(#f5f5f5, #e2e2e2 70%, #d8d8d8); gap: 3px; }
.g3 { margin-left: 1px; } .g5 { margin-left: 3px; } .g8 { margin-left: 4px; }
.dot { width: 2px; height: 2px; background: #666; flex: none; margin-left: 2px; }
.qsep { width: 1px; height: 14px; background: #d4d4d4; margin: 0 1px; }
.qa { font: bold 13px "Liberation Sans", sans-serif; color: #333; margin-left: 3px; }
.qhi { width: 17px; height: 17px; background: #cfe8f8; border: 1px solid #72b7e6; display: flex; align-items: center; justify-content: center; margin-left: 2px; }

.band { height: 21px; flex: none; background: #f1f1f1; border-bottom: 2px solid #aaa; }

/* Canvas */
.canvas { flex: 1; position: relative; background: #fff; }
.viewctl { position: absolute; left: 1033px; top: 5px; line-height: 0; }
.viewcube { position: absolute; left: 1005px; top: 30px; }
.cubetxt { font-size: 4.500px; fill: #888; text-anchor: middle; }
.navbar { position: absolute; left: 1040px; top: 92px; width: 20px; height: 73px; border: 1px solid #ddd; border-radius: 3px; background: #fff; display: flex; flex-direction: column; align-items: center; padding-top: 2px; gap: 2px; }
.navdot { width: 4px; height: 4px; border-radius: 50%; border: 1px solid #bbb; }
.lastdot { margin-top: 6px; }
.navcaret { border-top: 2px solid #777; border-left: 1.500px solid transparent; border-right: 1.500px solid transparent; margin: 3px 0; }
.navline { width: 12px; height: 1px; background: #e2e2e2; }
.cylinder { position: absolute; left: 346px; top: 155px; }

/* Properties palette */
.props { position: absolute; left: 25px; top: 136px; width: 172px; height: 272px; background: #fff; border: solid #b5b5b5; border-width: 0 2px 2px 2px; display: flex; flex-direction: column; }
.ptitle { height: 18px; flex: none; background: #c9dbea; border-bottom: 1px solid #9db2c6; display: flex; justify-content: space-between; align-items: center; padding: 0 3px 0 0; font-weight: 700; font-size: 8.300px; color: #222; }
.px { font-size: 9px; color: #222; font-family: "DejaVu Sans", sans-serif; }
.preview { height: 55px; flex: none; position: relative; }
.rlogo { width: 46px; height: 52px; margin: 1px 0 0 3px; background: linear-gradient(#fbfbfb, #f5f5f5); display: flex; align-items: center; justify-content: center; }
.rlogo span { font: bold 44px "Liberation Sans", sans-serif; color: #a0a0a0; }
.pvcaret { position: absolute; right: 4px; top: 26px; border-top: 2px solid #888; border-left: 2px solid transparent; border-right: 2px solid transparent; }
.typerow { height: 19px; flex: none; display: flex; }
.typesel { width: 113px; height: 17px; background: #f1f1f1; border: 1px solid #e0e0e0; display: flex; align-items: center; justify-content: space-between; padding: 0 3px 0 0; font-size: 8.400px; color: #333; }
.typeval { white-space: nowrap; }
.typesel svg { flex: none; }
.edittype { display: flex; align-items: center; gap: 2px; margin-left: 3px; height: 17px; color: #c4c4c4; font-size: 8.700px; white-space: nowrap; }
.ptable { height: 158px; flex: none; display: flex; }
.rows { width: 155px; flex: none; }
.ghead { height: 14px; background: #e6e6e6; display: flex; justify-content: space-between; align-items: center; padding: 0 3px 0 1px; font-size: 8.700px; color: #333; }
.ghead.other { height: 15px; }
.coll { font-size: 7px; color: #555; font-family: "DejaVu Sans", sans-serif; }
.prow { height: 15px; display: flex; border-bottom: 1px dotted #cfcfcf; align-items: center; font-size: 8.400px; color: #444; }
.pk { width: 77px; flex: none; padding-left: 4px; height: 100%; line-height: 14px; white-space: nowrap; border-right: 1px dotted #cfcfcf; }
.pv { padding-left: 2px; white-space: nowrap; }
.prow.dim { color: #9c9c9c; }
.cb { display: block; width: 8px; height: 8px; border: 1px solid #777; background: #fff; font-size: 7px; line-height: 7px; text-align: center; color: #777; }
.cb.on { border-color: #aaa; }
.pscroll { width: 11px; margin-left: 1px; display: flex; flex-direction: column; align-items: center; padding-top: 3px; }
.pthumb { width: 11px; height: 75px; margin-top: 60px; background: #cdcdcd; }
.pscroll svg:last-child { margin-top: 4px; }
.pfooter { flex: 1; display: flex; justify-content: space-between; align-items: center; padding: 0 2px 2px 0; }
.phelp { color: #2a77c9; text-decoration: underline; font-size: 8.700px; }
.apply { width: 49px; height: 17px; background: #cfcfcf; color: #8c8c8c; text-align: center; line-height: 17px; font-size: 8.700px; }

/* Project browser */
.browser { position: absolute; left: 857px; top: 88px; width: 168px; height: 323px; background: #fff; border: solid #b5b5b5; border-width: 0 2px 2px 2px; }
.btitle { height: 20px; background: #a9c3de; display: flex; justify-content: space-between; align-items: center; padding-right: 1px; font-weight: 700; font-size: 8.100px; color: #1f2630; white-space: nowrap; }
.bx { font-size: 9px; font-family: "DejaVu Sans", sans-serif; color: #223; }
.tree { font-size: 8.800px; color: #444; }
.node { height: 13.700px; display: flex; align-items: center; white-space: nowrap; }
.n0 { padding-left: 3px; }
.n1 { padding-left: 14px; }
.n2 { padding-left: 28px; }
.exp { width: 6px; height: 6px; background: #f2f2f2; border: 1px solid #d5d5d5; font-size: 6px; line-height: 4px; text-align: center; color: #777; margin-right: 4px; flex: none; }
.n1 .exp { margin-right: 6px; }
.ti { margin-right: 2px; flex: none; width: 9px; }
.dash { width: 7px; height: 1px; background: #ccc; margin-right: 2px; flex: none; }
.dash.short { margin-left: 3px; margin-right: 0; }
.sel { background: #f3f3f3; padding: 0 1px; margin-left: -1px; }
.links .ti { width: 11px; margin-right: 1px; }

/* Scroll parts */
.vthumb { position: absolute; right: 0; top: 225px; width: 9px; height: 13px; background: #e2e2e2; }
.vdown { position: absolute; right: 1px; top: 454px; }
.viewbar { position: absolute; left: 0; right: 0; bottom: 0; height: 17px; display: flex; align-items: center; }
.scale { margin-left: 14px; font-size: 8.200px; color: #444; width: 37px; flex: none; white-space: nowrap; }
.vbicons { display: flex; align-items: center; gap: 4px; }
.vbback { margin-left: 2px; }
.hthumb { position: absolute; left: 607px; top: 3px; width: 11px; height: 11px; background: #dedede; }
.hright { position: absolute; right: 13px; top: 4px; }
.grip { position: absolute; right: 0; top: 5px; }
```
